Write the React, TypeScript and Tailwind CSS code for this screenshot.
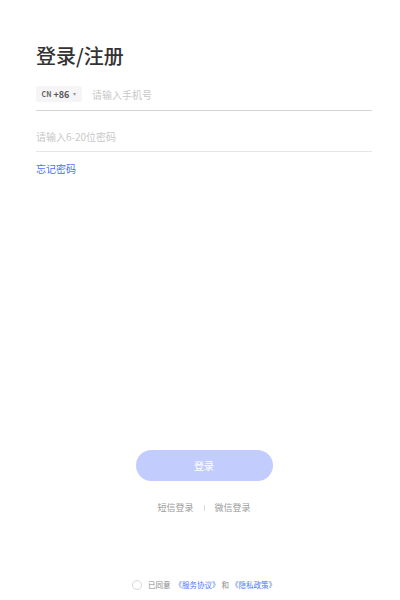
import React, { useState } from "react";

const font = { fontFamily: '"Noto Sans CJK SC", "Noto Sans", sans-serif' };

const LoginView = () => {
  const [phone, setPhone] = useState("");
  const [password, setPassword] = useState("");
  const [agreed, setAgreed] = useState(false);

  return (
    <div
      className="flex h-[600px] w-full flex-col bg-white pl-[36px] pr-[28px] pt-[41px] pb-[9px]"
      style={font}
    >
      <h1 className="text-[20px] font-medium leading-[30px] text-[#333]">
        登录/注册
      </h1>

      <div className="flex h-[40px] items-end border-b border-[#d4d4d4] pb-[8px]">
        <button className="flex h-[16px] w-[46px] items-center justify-center gap-[2px] rounded-[2px] bg-[#f5f5f7] text-[#555]">
          <span className="text-[7px] font-bold leading-none text-[#666]">CN</span>
          <span className="text-[9px] font-bold leading-none text-[#555]">+86</span>
          <span className="ml-[2px] text-[6px] leading-none text-[#999]">▾</span>
        </button>
        <input
          value={phone}
          onChange={(e) => setPhone(e.target.value)}
          placeholder="请输入手机号"
          className="ml-[10px] h-[16px] flex-1 bg-transparent text-[10px] text-[#333] outline-none placeholder:text-[#c8c8c8]"
        />
      </div>

      <div className="flex h-[41px] items-end border-b border-[#e6e6e6] pb-[8px]">
        <input
          type="password"
          value={password}
          onChange={(e) => setPassword(e.target.value)}
          placeholder="请输入6-20位密码"
          className="h-[14px] w-full bg-transparent text-[10px] text-[#333] outline-none placeholder:text-[#c8c8c8]"
        />
      </div>

      <div className="mt-[10px] text-[10px] leading-[14px]">
        <a href="#" className="text-[#4c6ef5]">
          忘记密码
        </a>
      </div>

      <div className="flex-1" />

      <div className="flex flex-col items-center">
        <button className="h-[31px] w-[137px] rounded-full bg-[#c3cdfd] text-[10px] text-white">
          登录
        </button>

        <div className="mt-[20px] flex items-center text-[9px] leading-[14px] text-[#999]">
          <a href="#">短信登录</a>
          <span className="mx-[10px] h-[6px] w-px bg-[#dcdcdc]" />
          <a href="#">微信登录</a>
        </div>

        <div className="mt-[64px] flex items-center text-[7.5px] leading-[12px] text-[#888]">
          <button
            onClick={() => setAgreed(!agreed)}
            className={`mr-[6px] h-[10px] w-[10px] rounded-full border ${
              agreed ? "border-[#4c6ef5] bg-[#4c6ef5]" : "border-[#d8d8d8]"
            }`}
          />
          <span>已同意</span>
          <a href="#" className="ml-[4px] text-[#4c7cf5]">《服务协议》</a>
          <span className="mx-[2px]">和</span>
          <a href="#" className="text-[#4c7cf5]">《隐私政策》</a>
        </div>
      </div>
    </div>
  );
};

export default function App() {
  return <LoginView />;
}
